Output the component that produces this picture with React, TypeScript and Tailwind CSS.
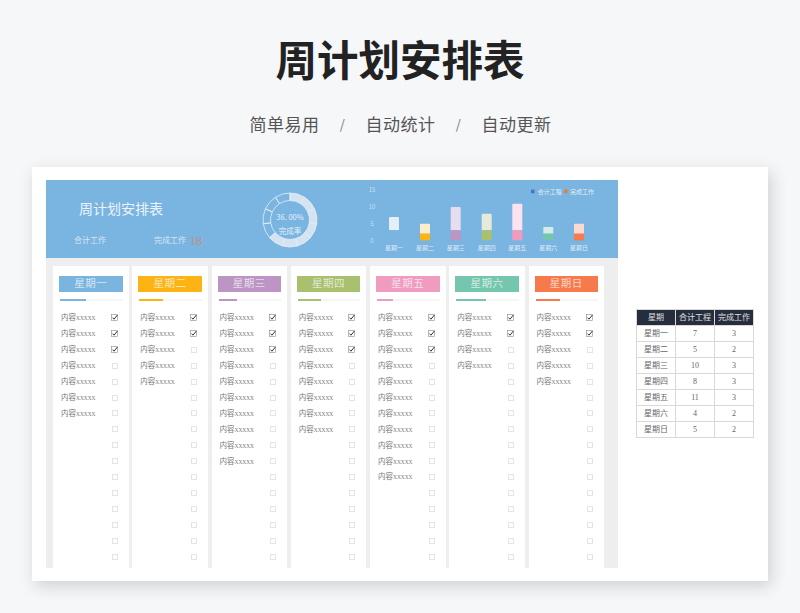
const SERIF = "font-['Liberation_Serif','Noto_Sans_CJK_SC',serif]";

const DAYS = [
  { name: "星期一", tile: "bg-[#7ab5e0]", fill: "w-[26px] bg-[#7ab5e0]", color: "#7ab5e0", total: 7, done: 3, light: "#e4eff9" },
  { name: "星期二", tile: "bg-[#fcb415]", fill: "w-[24px] bg-[#fcb415]", color: "#fcb415", total: 5, done: 2, light: "#fdeec9" },
  { name: "星期三", tile: "bg-[#bc95c5]", fill: "w-[18px] bg-[#bc95c5]", color: "#bc95c5", total: 10, done: 3, light: "#e6deee" },
  { name: "星期四", tile: "bg-[#a9c06e]", fill: "w-[23px] bg-[#a9c06e]", color: "#a9c06e", total: 8, done: 3, light: "#e8ead9" },
  { name: "星期五", tile: "bg-[#f09cc0]", fill: "w-[16px] bg-[#f09cc0]", color: "#f09cc0", total: 11, done: 3, light: "#fae3ee" },
  { name: "星期六", tile: "bg-[#75c6ae]", fill: "w-[30px] bg-[#75c6ae]", color: "#75c6ae", total: 4, done: 2, light: "#d5ebe6" },
  { name: "星期日", tile: "bg-[#f77a4c]", fill: "w-[24px] bg-[#f77a4c]", color: "#f77a4c", total: 5, done: 2, light: "#fcd9ce" },
];

function Check({ on }: { on: boolean }) {
  if (!on)
    return <span className="block w-[6px] h-[6px] border border-[#e4e4e4] bg-white" />;
  return (
    <svg width="7" height="7" viewBox="0 0 7 7" className="block">
      <rect x="0.5" y="0.5" width="6" height="6" fill="#fff" stroke="#888" strokeWidth="0.6" />
      <path d="M1.5 3.6 L3 5.2 L6.4 1" fill="none" stroke="#333" strokeWidth="1" />
    </svg>
  );
}

function DayCard({ d }: { d: (typeof DAYS)[number] }) {
  return (
    <div className="w-[75.5px] bg-white pt-[10px] px-[6px] shrink-0">
      <div className={`${d.tile} h-[16px] flex items-center justify-center text-[10.5px] tracking-[0.5px] text-white/70 ${SERIF}`}>
        {d.name}
      </div>
      <div className="h-[2px] mt-[7px] ml-[1px] bg-[#f6f6f6]">
        <div className={`h-full ${d.fill}`} />
      </div>
      <div className="mt-[9px] pl-[2px] pr-[5px]">
        {Array.from({ length: 16 }, (_, i) => (
          <div key={i} className="h-[15.93px] flex items-center justify-between">
            <span className={`text-[7.5px] leading-none text-[#777] ${SERIF}`}>
              {i < d.total ? (
                <>
                  内容<span className="text-[5.4px]">XXXXX</span>
                </>
              ) : null}
            </span>
            <Check on={i < d.done} />
          </div>
        ))}
      </div>
    </div>
  );
}

function Donut() {
  const n = 11;
  const cx = 29, cy = 29, R = 27, r = 19.5;
  const pt = (rad: number, a: number) => [cx + rad * Math.sin(a), cy - rad * Math.cos(a)];
  const segs = Array.from({ length: n }, (_, i) => {
    const a0 = (i / n) * Math.PI * 2;
    const a1 = ((i + 1) / n) * Math.PI * 2;
    const [x0, y0] = pt(R, a0);
    const [x1, y1] = pt(R, a1);
    const [x2, y2] = pt(r, a1);
    const [x3, y3] = pt(r, a0);
    return `M${x0} ${y0} A${R} ${R} 0 0 1 ${x1} ${y1} L${x2} ${y2} A${r} ${r} 0 0 0 ${x3} ${y3}Z`;
  });
  return (
    <div className="relative w-[58px] h-[58px] shrink-0">
      <svg width="58" height="58" viewBox="0 0 58 58">
        {segs.map((d, i) => (
          <path key={i} d={d} fill={i < 7 ? "#d3e3f1" : "none"} stroke="#e6eff7" strokeWidth="0.8" />
        ))}
      </svg>
      <div className="absolute inset-0 flex flex-col items-center pt-[21px] text-white/80 font-['Noto_Sans_CJK_SC',sans-serif]">
        <span className="text-[7.5px] leading-[10px]">36. 00%</span>
        <span className="text-[7.5px] leading-[10px] mt-[4px]">完成率</span>
      </div>
    </div>
  );
}

function Chart() {
  const base = 60.3;
  const unit = 3.33;
  const xs = [30, 61, 91.7, 122.7, 153.3, 184.3, 215];
  return (
    <svg width="254" height="78" viewBox="0 0 254 78" className="block shrink-0 font-['Noto_Sans_CJK_SC',sans-serif]">
      {[["15", 9.5], ["10", 27], ["5", 43.5], ["0", 60.5]].map(([t, y]) => (
        <text key={t} x="8" y={Number(y) + 2} fontSize="6" fill="#fff" fillOpacity="0.6" textAnchor="middle">{t}</text>
      ))}
      <rect x="167" y="9.6" width="3.6" height="3.6" fill="#4a74c4" />
      <text x="173.7" y="14" fontSize="6" fill="#fff" fillOpacity="0.8">合计工程</text>
      <rect x="200" y="9.6" width="3.6" height="3.6" fill="#ed7d31" />
      <text x="206" y="14" fontSize="6" fill="#fff" fillOpacity="0.8">完成工作</text>
      {DAYS.map((d, i) => {
        const h = d.total * unit;
        const dh = d.done * unit;
        return (
          <g key={d.name}>
            <path
              d={`M${xs[i] - 5} ${base - dh} V${base - h + 1} Q${xs[i] - 5} ${base - h} ${xs[i] - 4} ${base - h} H${xs[i] + 4} Q${xs[i] + 5} ${base - h} ${xs[i] + 5} ${base - h + 1} V${base - dh} Z`}
              fill={d.light}
            />
            <rect x={xs[i] - 5} y={base - dh} width="10" height={dh} fill={d.color} />
            <text x={xs[i]} y="69.5" fontSize="6" fill="#fff" fillOpacity="0.75" textAnchor="middle">{d.name}</text>
          </g>
        );
      })}
    </svg>
  );
}

export default function App() {
  return (
    <div className="w-[800px] h-[613px] overflow-hidden bg-[#f6f7f9] flex flex-col items-center font-['Noto_Sans_CJK_SC',sans-serif]">
      <h1 className="mt-[33px] h-[50px] leading-[50px] text-[41.5px] font-bold text-[#222] tracking-normal">周计划安排表</h1>
      <div className="mt-[28px] ml-[1px] h-[24px] flex items-center text-[17px] tracking-[0.5px] text-[#555] leading-none">
        <span>简单易用</span>
        <span className="w-[46px] text-center text-[13px] text-[#777]">/</span>
        <span>自动统计</span>
        <span className="w-[46px] text-center text-[13px] text-[#777]">/</span>
        <span>自动更新</span>
      </div>
      <div className="mt-[32px] w-[736px] h-[414px] shrink-0 bg-white shadow-[3px_5px_16px_rgba(0,0,0,0.16)] pt-[13px] pl-[14px] flex items-start">
        <div className="w-[572px] h-[388px] bg-[#eeeeee] flex flex-col shrink-0">
          <div className="h-[78px] bg-[#7ab4e0] flex items-stretch shrink-0">
            <div className={`w-[215px] shrink-0 pl-[28px] flex flex-col text-white/80 ${SERIF}`}>
              <div className="mt-[21px] ml-[5px] text-[14px] leading-[18px] text-white/85">周计划安排表</div>
              <div className="mt-[15px] flex items-center h-[14px] text-[8px] text-white/70">
                <span className="w-[80px]">合计工作</span>
                <span>完成工作</span>
                <span className="ml-[4px] text-[12px] text-[#c4917f]">18</span>
              </div>
            </div>
            <div className="w-[103px] shrink-0 pt-[10.6px]">
              <Donut />
            </div>
            <Chart />
          </div>
          <div className="flex-1 min-h-0 overflow-hidden pt-[8px] pl-[7px] flex gap-[3.75px]">
            {DAYS.map((d) => (
              <DayCard key={d.name} d={d} />
            ))}
          </div>
        </div>
        <table className={`ml-[18px] mt-[129px] border-collapse table-fixed w-[118px] text-[8px] leading-none text-center ${SERIF}`}>
          <thead>
            <tr className="h-[16px] bg-[#262e3d] text-white/85">
              {["星期", "合计工程", "完成工作"].map((t) => (
                <th key={t} className="font-normal border border-[#d9d9d9] p-0">{t}</th>
              ))}
            </tr>
          </thead>
          <tbody className="text-[#666]">
            {DAYS.map((d) => (
              <tr key={d.name} className="h-[16px]">
                <td className="border border-[#d9d9d9] p-0">{d.name}</td>
                <td className="border border-[#d9d9d9] p-0">{d.total}</td>
                <td className="border border-[#d9d9d9] p-0">{d.done}</td>
              </tr>
            ))}
          </tbody>
        </table>
      </div>
    </div>
  );
}
